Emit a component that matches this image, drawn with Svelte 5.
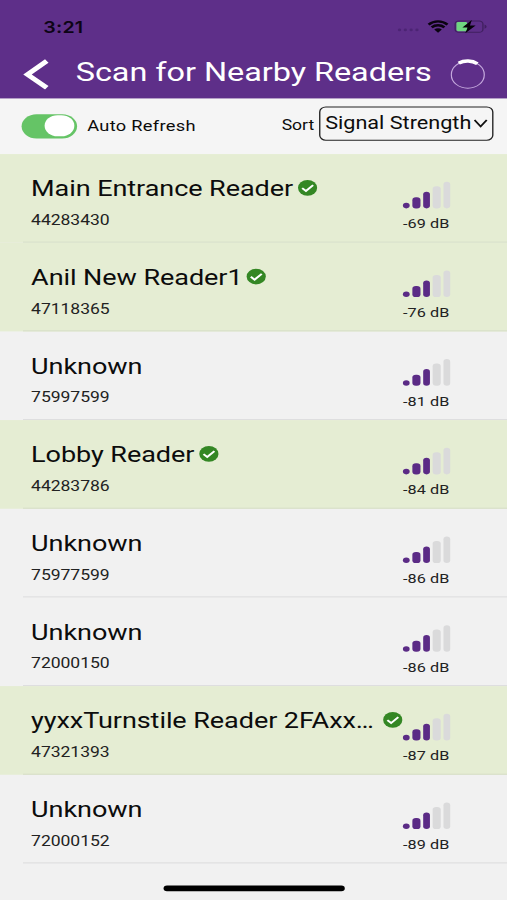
<script lang="ts">
	interface Reader {
		name: string;
		serial: string;
		signal: number;
		paired: boolean;
		gap?: number;
	}

	const readers: Reader[] = [
		{ name: 'Main Entrance Reader', serial: '44283430', signal: -69, paired: true, gap: 3 },
		{ name: 'Anil New Reader1', serial: '47118365', signal: -76, paired: true, gap: 3 },
		{ name: 'Unknown', serial: '75997599', signal: -81, paired: false },
		{ name: 'Lobby Reader', serial: '44283786', signal: -84, paired: true, gap: 3 },
		{ name: 'Unknown', serial: '75977599', signal: -86, paired: false },
		{ name: 'Unknown', serial: '72000150', signal: -86, paired: false },
		{ name: 'yyxxTurnstile Reader 2FAxx…', serial: '47321393', signal: -87, paired: true, gap: 6 },
		{ name: 'Unknown', serial: '72000152', signal: -89, paired: false }
	];

	const bars = [5, 10, 15, 19.5, 24];

	let autoRefresh = $state(true);
</script>

<div class="screen">
	<div class="phone">
		<header>
			<div class="status">
				<span class="time">3:21</span>
				<div class="status-icons">
					<svg class="cellular" viewBox="0 0 18 4">
						<circle cx="2.5" cy="2" r="1.2" />
						<circle cx="6.8" cy="2" r="1.2" />
						<circle cx="11.1" cy="2" r="1.2" />
						<circle cx="15.4" cy="2" r="1.2" />
					</svg>
					<svg class="wifi" viewBox="0 0 16 12">
						<path d="M1 4.2a10 10 0 0 1 14 0M3.3 6.7a6.7 6.7 0 0 1 9.4 0" />
						<path class="wifi-dot" d="M5.2 8.7a4 4 0 0 1 5.6 0L8 11.6z" />
					</svg>
					<svg class="battery" viewBox="0 0 25 12">
						<rect class="shell" x="0.6" y="0.9" width="20.6" height="10.2" rx="2.8" />
						<path class="cap" d="M22.4 4v4c1-.4 1.5-1.1 1.5-2s-.5-1.6-1.5-2z" />
						<rect class="charge" x="1.6" y="1.8" width="8" height="8.4" rx="1.3" />
						<path class="bolt" d="M13 0 6 6.8h3.9l-1.8 5.2L15.8 4.9h-4.2z" />
					</svg>
				</div>
			</div>
			<div class="nav">
				<button class="back" aria-label="Back">
					<svg viewBox="0 0 20 28"><path d="M17.6 2 3.3 14.2l14.3 12" /></svg>
				</button>
				<h1>Scan for Nearby Readers</h1>
				<svg class="spinner" viewBox="0 0 26 28">
					<circle cx="13" cy="14.4" r="12.2" />
					<path d="M6.3 3.9a12.2 12.2 0 0 1 13.8 .6" />
				</svg>
			</div>
		</header>

		<div class="toolbar">
			<button
				class="toggle"
				class:on={autoRefresh}
				role="switch"
				aria-checked={autoRefresh}
				aria-label="Auto Refresh"
				onclick={() => (autoRefresh = !autoRefresh)}
			>
				<span class="knob"></span>
			</button>
			<span class="label">Auto Refresh</span>
			<span class="sort">Sort</span>
			<button class="select">
				<span>Signal Strength</span>
				<svg viewBox="0 0 11 9"><path d="M1 1.2 5.5 7.2 10 1.2" /></svg>
			</button>
		</div>

		<ul>
			{#each readers as reader (reader.serial)}
				<li class:paired={reader.paired}>
					<div class="row">
						<div class="info">
							<div class="name">
								<span>{reader.name}</span>
								{#if reader.paired}
									<svg class="check" style="margin-left: {reader.gap}px" viewBox="0 0 15 15">
										<circle cx="7.5" cy="7.5" r="7.1" />
										<path d="M3.5 7.7 6.3 10.3 11.6 5" />
									</svg>
								{/if}
							</div>
							<div class="serial">{reader.serial}</div>
						</div>
						<div class="signal">
							<div class="bars">
								{#each bars as height, i}
									<span class="bar" class:active={i < 3} style="height: {height}px"></span>
								{/each}
							</div>
							<div class="level">{reader.signal} dB</div>
						</div>
					</div>
				</li>
			{/each}
		</ul>

		<div class="home"></div>
	</div>
</div>

<style>
	:global(body) {
		margin: 0;
		background: #f1f1f1;
	}

	.screen {
		width: 507px;
		height: 900px;
		overflow: hidden;
	}

	/* 375x812 layout stretched over the whole window */
	.phone {
		display: flex;
		flex-direction: column;
		width: 375px;
		height: 812px;
		transform: scale(1.352, 1.1084);
		transform-origin: 0 0;
		background: #f1f1f1;
		color: #0c0c0c;
		font-family: Roboto, sans-serif;
	}

	button {
		padding: 0;
		border: 0;
		background: none;
		color: inherit;
		font-family: inherit;
	}

	svg {
		display: block;
		fill: none;
		flex: none;
	}

	header {
		flex: none;
		box-sizing: border-box;
		height: 88.6px;
		background: #5e2f89;
	}

	.status {
		display: flex;
		align-items: center;
		justify-content: space-between;
		height: 48px;
		padding: 0 14px 0 32px;
		box-sizing: border-box;
	}

	.time {
		font-family: Inter, sans-serif;
		font-size: 14.5px;
		font-weight: 600;
		letter-spacing: 0.15px;
		color: #0d0416;
	}

	.status-icons {
		display: flex;
		align-items: center;
	}

	.cellular {
		width: 18px;
		height: 4px;
		margin: 6px 4.5px 0 0;
		fill: #4c2474;
	}

	.wifi {
		width: 16px;
		height: 12px;
		margin: -1px 4.5px 0 0;
		stroke: #0a0310;
		stroke-width: 2.1;
	}

	.wifi-dot {
		fill: #0a0310;
		stroke: none;
	}

	.battery {
		width: 25px;
		height: 12px;
	}

	.shell {
		stroke: #40205f;
		stroke-width: 1;
	}

	.cap {
		fill: #40205f;
	}

	.charge {
		fill: #6fd681;
	}

	.bolt {
		fill: #050208;
	}

	.nav {
		display: flex;
		align-items: center;
		height: 36px;
		padding: 0 16px 0 17px;
	}

	.back svg {
		width: 20px;
		height: 28px;
		margin-top: 1px;
		stroke: #fff;
		stroke-width: 4;
	}

	h1 {
		flex: 1;
		margin: -3px 0 0 19px;
		font-size: 24px;
		font-weight: 400;
		letter-spacing: -0.04px;
		line-height: 30px;
		color: #fff;
		white-space: nowrap;
	}

	.spinner {
		width: 26px;
		height: 28px;
		margin-top: 1px;
		stroke: #fff;
	}

	.spinner circle {
		stroke: #c5a9dd;
		stroke-width: 0.9;
	}

	.spinner path {
		stroke-width: 3;
	}

	.toolbar {
		display: flex;
		flex: none;
		align-items: center;
		box-sizing: border-box;
		height: 50px;
		padding: 0 10px 0 16px;
		background: #f5f5f5;
	}

	.toggle {
		display: flex;
		align-items: center;
		box-sizing: border-box;
		width: 40.5px;
		height: 22px;
		padding: 1.2px;
		border-radius: 11px;
		background: #d8d8d8;
	}

	.toggle.on {
		justify-content: flex-end;
		background: #65c466;
	}

	.knob {
		width: 22px;
		height: 19.6px;
		border-radius: 11px;
		background: #fff;
	}

	.label {
		margin: -1px 0 0 8px;
		font-size: 13.5px;
		letter-spacing: 0.22px;
	}

	.sort {
		margin: -3px 3.2px 0 auto;
		font-size: 13px;
		letter-spacing: -0.05px;
	}

	.select {
		display: flex;
		align-items: center;
		box-sizing: border-box;
		width: 129.5px;
		height: 30.5px;
		margin-top: -4px;
		padding: 0 3px 2px 4px;
		border: 1px solid #222;
		border-radius: 5px;
		font-size: 16px;
		white-space: nowrap;
	}

	.select svg {
		width: 11px;
		height: 9px;
		margin: 1px 0 0 auto;
		stroke: #111;
		stroke-width: 1.4;
	}

	ul {
		flex: none;
		margin: 0;
		padding: 0;
		list-style: none;
	}

	li {
		height: 80px;
		padding-left: 17px;
	}

	li.paired {
		background: #e5edd3;
	}

	.row {
		display: flex;
		box-sizing: border-box;
		height: 80px;
		padding-left: 6px;
		border-bottom: 1px solid #dededf;
	}

	.paired .row {
		border-color: #d7dfc8;
	}

	.info {
		width: 275px;
		padding-top: 19px;
	}

	.name {
		display: flex;
		align-items: center;
		height: 24px;
		font-size: 20px;
		letter-spacing: -0.06px;
		white-space: nowrap;
	}

	.check {
		width: 15px;
		height: 15px;
	}

	.check circle {
		fill: #348724;
	}

	.check path {
		stroke: #fff;
		stroke-width: 1.6;
	}

	.serial {
		margin-top: 9.2px;
		font-size: 13px;
		letter-spacing: -0.05px;
		line-height: 16px;
		color: #222;
	}

	.signal {
		width: 36px;
		padding-top: 25.4px;
	}

	.bars {
		display: flex;
		align-items: flex-end;
		gap: 2.3px;
		height: 24px;
	}

	.bar {
		width: 5.2px;
		border-radius: 2.6px;
		background: #dadadb;
	}

	.bar.active {
		background: #5b2b86;
	}

	.level {
		margin-top: 7.5px;
		font-size: 12px;
		letter-spacing: 0.05px;
		line-height: 15px;
		color: #222;
		white-space: nowrap;
	}

	.home {
		flex: none;
		width: 134px;
		height: 5px;
		margin: 20.5px 0 0 121px;
		border-radius: 3px;
		background: #000;
	}
</style>
